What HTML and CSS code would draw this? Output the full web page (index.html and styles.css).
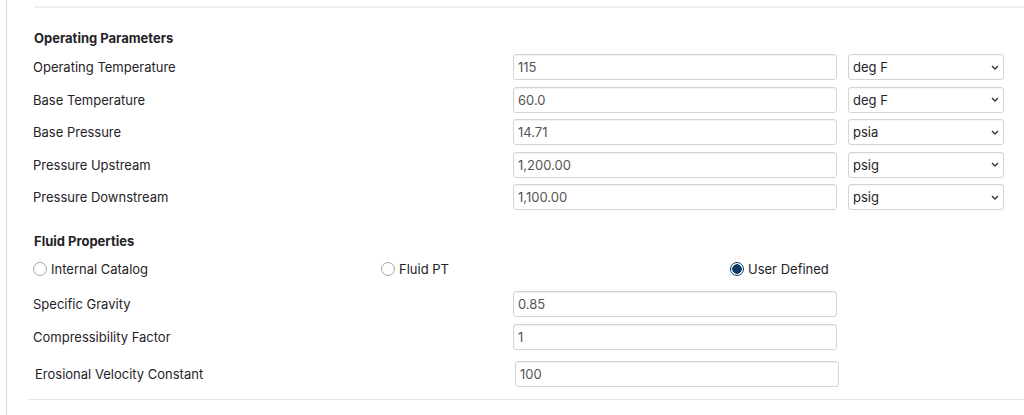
FILE: index.html
```html
<!DOCTYPE html>
<html>
<head>
<meta charset="utf-8">
<link rel="stylesheet" href="styles.css">
</head>
<body>
<div class="panel">
  <div class="top-rule"></div>
  <section class="group">
    <h3 class="group-title">Operating Parameters</h3>
    <div class="row">
      <label class="lbl">Operating Temperature</label>
      <input class="field" type="text" value="115">
      <div class="select"><span>deg F</span><svg class="chev" viewBox="0 0 8 5"><path d="M1 1 L4 4 L7 1" fill="none" stroke="#333" stroke-width="1.4"/></svg></div>
    </div>
    <div class="row">
      <label class="lbl">Base Temperature</label>
      <input class="field" type="text" value="60.0">
      <div class="select"><span>deg F</span><svg class="chev" viewBox="0 0 8 5"><path d="M1 1 L4 4 L7 1" fill="none" stroke="#333" stroke-width="1.4"/></svg></div>
    </div>
    <div class="row">
      <label class="lbl">Base Pressure</label>
      <input class="field" type="text" value="14.71">
      <div class="select"><span>psia</span><svg class="chev" viewBox="0 0 8 5"><path d="M1 1 L4 4 L7 1" fill="none" stroke="#333" stroke-width="1.4"/></svg></div>
    </div>
    <div class="row">
      <label class="lbl">Pressure Upstream</label>
      <input class="field" type="text" value="1,200.00">
      <div class="select"><span>psig</span><svg class="chev" viewBox="0 0 8 5"><path d="M1 1 L4 4 L7 1" fill="none" stroke="#333" stroke-width="1.4"/></svg></div>
    </div>
    <div class="row">
      <label class="lbl">Pressure Downstream</label>
      <input class="field" type="text" value="1,100.00">
      <div class="select"><span>psig</span><svg class="chev" viewBox="0 0 8 5"><path d="M1 1 L4 4 L7 1" fill="none" stroke="#333" stroke-width="1.4"/></svg></div>
    </div>
  </section>
  <section class="group fluid">
    <h3 class="group-title">Fluid Properties</h3>
    <div class="radios">
      <label class="radio"><span class="dot"></span>Internal Catalog</label>
      <label class="radio"><span class="dot"></span>Fluid PT</label>
      <label class="radio"><span class="dot on"></span>User Defined</label>
    </div>
    <div class="row">
      <label class="lbl">Specific Gravity</label>
      <input class="field" type="text" value="0.85">
    </div>
    <div class="row">
      <label class="lbl">Compressibility Factor</label>
      <input class="field" type="text" value="1">
    </div>
    <div class="row shifted">
      <label class="lbl">Erosional Velocity Constant</label>
      <input class="field" type="text" value="100">
    </div>
  </section>
  <div class="bottom-rule"></div>
</div>
</body>
</html>
```
FILE: styles.css
```css
* { box-sizing: border-box; }
html, body { margin: 0; padding: 0; background: #fff; }
body {
  font-family: Inter, "Noto Sans", "Liberation Sans", sans-serif;
  font-size: 13px;
  color: #1f2328;
  width: 1024px;
  height: 415px;
  overflow: hidden;
}
.panel {
  margin-left: 6px;
  border-left: 1px solid #d9d9d9;
  height: 415px;
  padding-left: 26px;
  padding-top: 6px;
}
.top-rule {
  height: 2px;
  background: #efefef;
  margin-left: 1px;
  margin-right: -40px;
}
.group-title {
  font-size: 13px;
  font-weight: 650;
  margin: 0;
  line-height: 20px;
  padding-left: 1px;
}
.group:first-of-type .group-title { margin-top: 20px; margin-bottom: 6px; }
.row {
  display: grid;
  grid-template-columns: 469px 324px 156px;
  column-gap: 11px;
  align-items: center;
  height: 26px;
  margin-bottom: 6.5px;
}
.lbl { line-height: 26px; }
.field {
  width: 324px;
  height: 26px;
  border: 1px solid #d4d4d4;
  border-radius: 3px;
  padding: 0 4px;
  font: inherit;
  font-size: 13px;
  color: #555;
  background: #fff;
  box-shadow: inset 0 1px 1px rgba(0,0,0,0.06);
  outline: none;
}
.select {
  height: 26px;
  border: 1px solid #d4d4d4;
  border-radius: 3px;
  padding: 0 4px 0 4px;
  display: flex;
  align-items: center;
  justify-content: space-between;
  color: #1f2328;
  box-shadow: inset 0 1px 1px rgba(0,0,0,0.04);
}
.chev { width: 8px; height: 5px; margin-right: 0; }
.fluid .group-title { margin-top: 21px; }
.radios {
  display: grid;
  grid-template-columns: 348px 349px 300px;
  margin-top: 9px;
  height: 18px;
  align-items: center;
  margin-bottom: 13px;
}
.radio { display: flex; align-items: center; gap: 4px; }
.dot {
  width: 14px; height: 14px;
  border-radius: 50%;
  border: 1px solid #a5a5a5;
  display: inline-block;
  background: #fff;
}
.dot.on {
  border: 1px solid #0b3a66;
  background: radial-gradient(circle, #0b3a66 0 4.5px, #fff 5px);
}
.shifted { margin-top: 11.5px; padding-left: 2px; grid-template-columns: 469px 324px; }
.bottom-rule {
  height: 1px;
  background: #e6e6e6;
  margin-left: -5px;
  margin-right: -40px;
  margin-top: 11.5px;
}
```
